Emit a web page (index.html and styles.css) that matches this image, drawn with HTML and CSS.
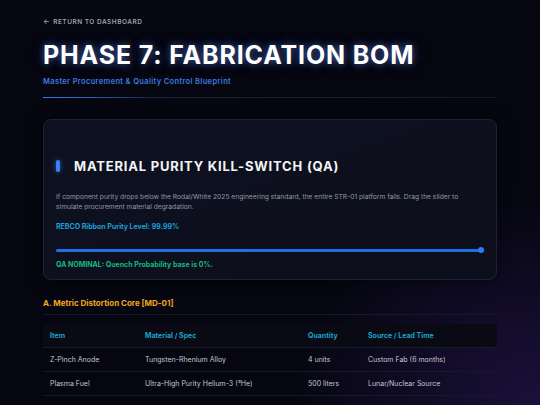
FILE: index.html
```html
<!DOCTYPE html>
<html lang="en">
<head>
<meta charset="utf-8">
<title>Phase 7: Fabrication BOM</title>
<link rel="stylesheet" href="styles.css">
</head>
<body>
<main class="page">
  <a class="back" href="#"><span class="arrow">←</span> RETURN TO DASHBOARD</a>
  <header class="hero">
    <h1 class="title">PHASE 7: FABRICATION BOM</h1>
    <p class="subtitle">Master Procurement &amp; Quality Control Blueprint</p>
    <div class="divider"></div>
  </header>

  <section class="card">
    <div class="card-head">
      <span class="accent"></span>
      <h2 class="card-title">MATERIAL PURITY KILL-SWITCH (QA)</h2>
    </div>
    <p class="card-text">If component purity drops below the Rodal/White 2025 engineering standard, the entire STR-01 platform fails. Drag the slider to simulate procurement material degradation.</p>
    <p class="purity">REBCO Ribbon Purity Level: 99.99%</p>
    <div class="slider">
      <div class="track"></div>
      <span class="thumb"></span>
    </div>
    <p class="status">QA NOMINAL: Quench Probability base is 0%.</p>
  </section>

  <section class="bom">
    <h3 class="bom-title">A. Metric Distortion Core [MD-01]</h3>
    <table class="table">
      <thead>
        <tr><th class="c1">Item</th><th class="c2">Material / Spec</th><th class="c3">Quantity</th><th class="c4">Source / Lead Time</th></tr>
      </thead>
      <tbody>
        <tr><td>Z-Pinch Anode</td><td>Tungsten-Rhenium Alloy</td><td>4 units</td><td>Custom Fab (6 months)</td></tr>
        <tr><td>Plasma Fuel</td><td>Ultra-High Purity Helium-3 (³He)</td><td>500 liters</td><td>Lunar/Nuclear Source</td></tr>
      </tbody>
    </table>
  </section>
</main>
</body>
</html>
```

FILE: styles.css
```css
* { box-sizing: border-box; }
html, body { margin: 0; padding: 0; }
body {
  min-height: 405px;
  background:
    radial-gradient(ellipse 260px 220px at 100% 100%, rgba(70, 35, 140, 0.35), rgba(70, 35, 140, 0) 100%),
    #05060f;
  font-family: Inter, "Noto Sans", sans-serif;
  color: #e5e7eb;
  overflow: hidden;
}
.page {
  padding: 18px 43px 0;
}
.back {
  display: flex;
  width: fit-content;
  align-items: center;
  gap: 3px;
  font-size: 6.5px;
  font-weight: 600;
  letter-spacing: 0.5px;
  color: #9aa1b4;
  text-decoration: none;
  line-height: 8px;
}
.arrow { font-size: 7px; }
.hero { margin-top: 14px; }
.title {
  margin: 0;
  font-family: Inter, sans-serif;
  font-size: 25px;
  line-height: 30px;
  font-weight: 700;
  letter-spacing: 0.85px;
  color: #ffffff;
  text-shadow: 0 0 7px rgba(120, 160, 255, 0.5), 0 0 14px rgba(80, 120, 255, 0.25);
}
.subtitle {
  margin: 7px 0 0;
  font-size: 7.5px;
  line-height: 10px;
  font-weight: 600;
  letter-spacing: 0.35px;
  color: #3b7be0;
}
.divider {
  margin-top: 10px;
  height: 1px;
  background: linear-gradient(90deg, #3b7be0 0px, #2f5fb8 50px, #1a2340 110px, #141a2c 100%);
}
.card {
  margin-top: 21px;
  border: 1px solid #1b2336;
  border-radius: 8px;
  background: linear-gradient(160deg, #0e1120 0%, #0c0e1b 100%);
  box-shadow: 0 0 14px rgba(0, 0, 0, 0.5);
  padding: 39px 12px 9px;
}
.card-head {
  display: flex;
  align-items: center;
  gap: 14px;
  height: 14px;
}
.accent {
  width: 4px;
  height: 12px;
  border-radius: 2px;
  background: #3b82f6;
  box-shadow: 0 0 5px rgba(59, 130, 246, 0.7);
}
.card-title {
  margin: 0;
  font-size: 13px;
  line-height: 14px;
  font-weight: 700;
  letter-spacing: 0.8px;
  color: #f3f4f6;
}
.card-text {
  margin: 19px 0 0;
  font-size: 6.7px;
  line-height: 10px;
  color: #9298a8;
  max-width: 418px;
}
.purity {
  margin: 10px 0 0;
  font-size: 7px;
  line-height: 10px;
  font-weight: 700;
  color: #1ba0d8;
}
.slider {
  position: relative;
  margin: 15px 0 0;
  height: 6px;
  display: flex;
  align-items: center;
}
.track {
  flex: 1;
  height: 3px;
  border-radius: 2px;
  background: #1f6fe0;
}
.thumb {
  position: absolute;
  right: 0;
  top: 0;
  width: 6px;
  height: 6px;
  border-radius: 50%;
  background: #2b7cf0;
}
.status {
  margin: 7px 0 0;
  font-size: 7px;
  line-height: 10px;
  font-weight: 700;
  color: #16b981;
}
.bom { margin-top: 18px; }
.bom-title {
  margin: 0;
  padding-bottom: 6px;
  border-bottom: 1px solid #151a2a;
  font-size: 8px;
  line-height: 10px;
  font-weight: 700;
  color: #f0a91c;
}
.table {
  margin-top: 9px;
  width: 100%;
  border-collapse: collapse;
  font-size: 7px;
}
.table th {
  text-align: left;
  font-weight: 700;
  color: #14a6cc;
  background: #090a13;
  height: 23px;
  padding: 0 7px;
  border-bottom: 1px solid #151a2a;
}
.table td {
  text-align: left;
  color: #c3c6cf;
  height: 24px;
  padding: 0 7px;
  border-bottom: 1px solid #151a2a;
}
.c1 { width: 95px; }
.c2 { width: 163px; }
.c3 { width: 60px; }
```
